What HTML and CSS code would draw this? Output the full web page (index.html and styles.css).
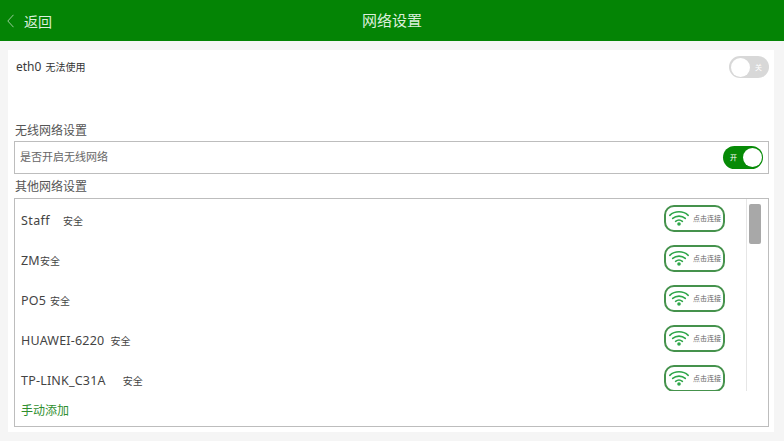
FILE: index.html
```html
<!DOCTYPE html>
<html lang="zh-CN">
<head>
<meta charset="utf-8">
<title>网络设置</title>
<link rel="stylesheet" href="styles.css">
</head>
<body>
<svg class="defs" width="0" height="0" aria-hidden="true">
  <symbol id="wifi" viewBox="0 0 20 16">
    <g fill="none" stroke="currentColor" stroke-width="1.600" stroke-linecap="round">
      <path d="M.8 5.300C5.800 .6 14.200 .6 19.200 5.300"/>
      <path d="M3.700 8.400C7.200 5.300 12.800 5.300 16.300 8.400"/>
      <path d="M6.600 11.300C8.500 9.800 11.500 9.800 13.400 11.300"/>
    </g>
    <circle cx="10" cy="14" r="1.800" fill="currentColor"/>
  </symbol>
</svg>
<header class="topbar">
  <div class="back">
    <svg class="chevron" viewBox="0 0 7 14" aria-hidden="true"><path d="M6.500 .8 .8 7l5.700 6.200"/></svg>
    <span>返回</span>
  </div>
  <h1 class="title">网络设置</h1>
</header>
<main class="card">
  <div class="eth-row">
    <div class="eth-label"><span class="eth-name">eth0</span><span class="eth-state">无法使用</span></div>
    <div class="switch switch-off"><span class="knob"></span><span class="switch-text">关</span></div>
  </div>
  <div class="section-label section-first">无线网络设置</div>
  <div class="wireless-box">
    <span class="wireless-text">是否开启无线网络</span>
    <div class="switch switch-on"><span class="switch-text">开</span><span class="knob"></span></div>
  </div>
  <div class="section-label section-second">其他网络设置</div>
  <section class="network-box">
    <div class="list-area">
      <ul class="network-list">
        <li class="network">
          <div class="net-label"><span class="net-name tracked">Staff</span><span class="secure gap-staff">安全</span></div>
          <button class="connect"><svg class="wifi"><use href="#wifi"/></svg><span>点击连接</span></button>
        </li>
        <li class="network">
          <div class="net-label"><span class="net-name">ZM</span><span class="secure gap-zm">安全</span></div>
          <button class="connect"><svg class="wifi"><use href="#wifi"/></svg><span>点击连接</span></button>
        </li>
        <li class="network">
          <div class="net-label"><span class="net-name">PO5</span><span class="secure gap-po">安全</span></div>
          <button class="connect"><svg class="wifi"><use href="#wifi"/></svg><span>点击连接</span></button>
        </li>
        <li class="network">
          <div class="net-label"><span class="net-name">HUAWEI-6220</span><span class="secure gap-hw">安全</span></div>
          <button class="connect"><svg class="wifi"><use href="#wifi"/></svg><span>点击连接</span></button>
        </li>
        <li class="network">
          <div class="net-label"><span class="net-name">TP-LINK_C31A</span><span class="secure gap-tp">安全</span></div>
          <button class="connect"><svg class="wifi"><use href="#wifi"/></svg><span>点击连接</span></button>
        </li>
      </ul>
      <div class="scrollbar"><span class="thumb"></span></div>
    </div>
    <a class="manual-add">手动添加</a>
  </section>
</main>
</body>
</html>
```
FILE: styles.css
```css
* { box-sizing: border-box; }
html, body { margin: 0; height: 100%; }
body {
  background: #f5f5f5;
  color: #444;
  font-family: "Noto Sans", "Noto Sans CJK SC", sans-serif;
  overflow: hidden;
}
.defs { display: block; height: 0; }
.topbar {
  position: relative;
  height: 41px;
  background: #048405;
  color: #dcefdc;
  display: flex;
  align-items: center;
  justify-content: center;
}
.back {
  position: absolute;
  left: 7px;
  top: 0;
  height: 41px;
  display: flex;
  align-items: center;
  gap: 10px;
  font-size: 14px;
}
.chevron { width: 7px; height: 14px; fill: none; stroke: #bfe0bf; stroke-width: .8; }
.title { margin: 0 0 2px 0; font-size: 15px; font-weight: 400; line-height: 20px; }
.card {
  margin: 9px 10px 0 8px;
  height: 382px;
  background: #fff;
  padding: 0 5px 5px 6px;
  display: flex;
  flex-direction: column;
}
.eth-row {
  height: 34px;
  padding: 6px 0 0 2px;
  display: flex;
  justify-content: space-between;
  align-items: flex-start;
}
.eth-label { display: flex; align-items: center; height: 22px; margin-top: -1px; }
.eth-name { font-size: 12px; color: #3a3a3a; }
.eth-state { font-size: 10px; margin-left: 4px; color: #333; }
.switch {
  width: 40px;
  height: 22px;
  border-radius: 11px;
  display: flex;
  align-items: center;
  padding: 0 1.500px;
}
.switch .knob { width: 19px; height: 19px; border-radius: 50%; background: #fff; flex: none; }
.switch-text { font-size: 7px; color: #fff; flex: 1; text-align: center; line-height: 1; }
.switch-off { background: #d8d8d8; }
.switch-on { background: #068a06; height: 23px; border-radius: 12px; margin-right: 5px; }
.section-label { font-size: 12px; line-height: 16px; color: #555; padding-left: 1px; height: 16px; }
.section-first { margin-top: 39px; margin-bottom: 2px; }
.section-second { margin-top: 5px; margin-bottom: 3px; }
.wireless-box {
  height: 33px;
  border: 1px solid #bdbdbd;
  display: flex;
  align-items: center;
  justify-content: space-between;
  padding-left: 5px;
  font-size: 11px;
  color: #666;
}
.wireless-text { margin-bottom: 3px; }
.network-box {
  height: 229px;
  border: 1px solid #bdbdbd;
  display: flex;
  flex-direction: column;
}
.list-area { height: 192px; display: flex; overflow: hidden; }
.network-list {
  list-style: none;
  margin: 0;
  padding: 1px 21px 0 6px;
  flex: 1;
  min-width: 0;
}
.network {
  height: 40px;
  display: flex;
  align-items: center;
  justify-content: space-between;
}
.net-label { display: flex; align-items: center; }
.net-name { font-size: 12.500px; color: #444; letter-spacing: .2px; }
.tracked { letter-spacing: .4px; }
.secure { font-size: 10px; color: #444; margin-top: 1px; }
.gap-staff { margin-left: 13px; }
.gap-zm { margin-left: 0; }
.gap-po { margin-left: 4px; }
.gap-hw { margin-left: 6px; }
.gap-tp { margin-left: 17px; }
.connect {
  width: 61px;
  height: 27px;
  margin-bottom: 4px;
  border: 2px solid #45924c;
  border-radius: 10px;
  background: #fff;
  padding: 0 0 0 3px;
  display: flex;
  align-items: center;
  font-family: inherit;
  font-size: 7px;
  color: #666;
  white-space: nowrap;
}
.wifi { width: 20px; height: 16px; color: #2fa64a; flex: none; margin-right: 4px; }
.scrollbar {
  width: 22px;
  flex: none;
  border-left: 1px solid #e6e6e6;
  padding: 5px 0 0 2px;
}
.thumb { display: block; width: 12px; height: 40px; background: #a8a8a8; border-radius: 2px; }
.manual-add {
  font-size: 12px;
  line-height: 16px;
  padding: 12px 0 0 6px;
  color: #2f8f2f;
}
```
